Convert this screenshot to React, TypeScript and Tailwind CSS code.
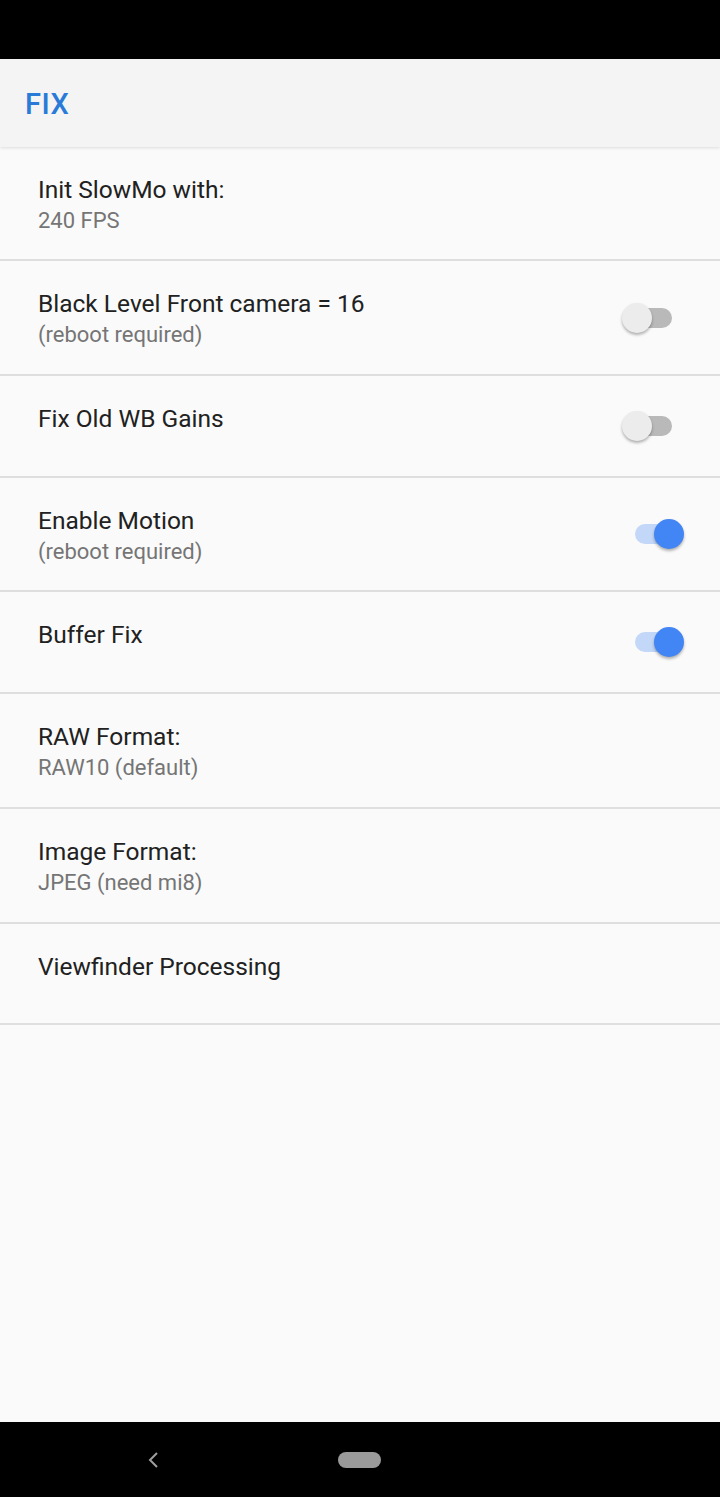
import React from "react";

type RowProps = {
  title: string;
  subtitle?: string;
  toggle?: "on" | "off";
  h: string;
};

function Switch({ on }: { on: boolean }) {
  return (
    <div className="relative w-[62px] h-[32px]">
      <div
        className={
          on
            ? "absolute left-[13px] top-[6px] w-[37px] h-[20px] rounded-full bg-[#c3d7f8]"
            : "absolute left-[13px] top-[6px] w-[37px] h-[20px] rounded-full bg-[#b9b9b9]"
        }
      />
      <div
        className={
          on
            ? "absolute right-0 top-[1px] w-[30px] h-[30px] rounded-full bg-[#4285f4] shadow-[0_2px_3px_rgba(0,0,0,0.3)]"
            : "absolute left-0 top-[1px] w-[30px] h-[30px] rounded-full bg-[#ececec] shadow-[0_2px_3px_rgba(0,0,0,0.3)]"
        }
      />
    </div>
  );
}

function Row({ title, subtitle, toggle, h }: RowProps) {
  return (
    <div className={`flex border-b-2 border-[#dedede] ${h}`}>
      <div className="flex-1 pl-[38px] pt-[28px]">
        <div className="text-[24.5px] leading-[30px] text-[#212121]">{title}</div>
        {subtitle && (
          <div className="text-[22px] leading-[32px] text-[#757575]">{subtitle}</div>
        )}
      </div>
      {toggle && (
        <div className="flex items-center pr-[36px]">
          <Switch on={toggle === "on"} />
        </div>
      )}
    </div>
  );
}

export default function App() {
  return (
    <div
      className="w-[720px] h-[1497px] flex flex-col bg-[#fafafa] overflow-hidden"
      style={{ fontFamily: "Roboto, 'Noto Sans', sans-serif" }}
    >
      <div className="h-[59px] bg-black shrink-0" />
      <div className="relative z-10 h-[88px] shrink-0 bg-[#f4f4f4] flex items-center pl-[25px] shadow-[0_1px_3px_rgba(0,0,0,0.12)]">
        <span className="mt-[3px] text-[29px] font-medium text-[#2a7bd8] tracking-[0.5px]">FIX</span>
      </div>
      <div className="flex-1 flex flex-col">
        <Row title="Init SlowMo with:" subtitle="240 FPS" h="h-[114px]" />
        <Row
          title="Black Level Front camera = 16"
          subtitle="(reboot required)"
          toggle="off"
          h="h-[115px]"
        />
        <Row title="Fix Old WB Gains" toggle="off" h="h-[102px]" />
        <Row
          title="Enable Motion"
          subtitle="(reboot required)"
          toggle="on"
          h="h-[114px]"
        />
        <Row title="Buffer Fix" toggle="on" h="h-[102px]" />
        <Row title="RAW Format:" subtitle="RAW10 (default)" h="h-[115px]" />
        <Row title="Image Format:" subtitle="JPEG (need mi8)" h="h-[115px]" />
        <Row title="Viewfinder Processing" h="h-[101px]" />
      </div>
      <div className="h-[75px] shrink-0 bg-black flex items-center">
        <div className="w-[146px]" />
        <svg width="14" height="20" viewBox="0 0 14 20" className="mt-[1px]">
          <path d="M11 3 L4 10 L11 17" stroke="#9e9e9e" strokeWidth="2" fill="none" />
        </svg>
        <div className="w-[178px]" />
        <div className="w-[43px] h-[16px] rounded-full bg-[#9a9a9a] mt-[1px]" />
      </div>
    </div>
  );
}
